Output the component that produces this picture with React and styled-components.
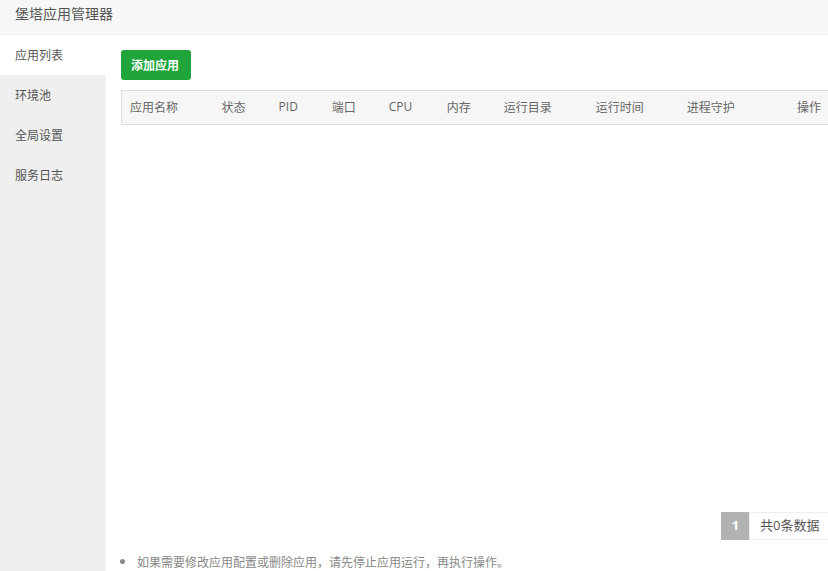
import React from "react";
import styled, { createGlobalStyle } from "styled-components";

const GlobalStyle = createGlobalStyle`
  html, body {
    margin: 0;
    height: 100%;
    overflow: hidden;
    background: #ffffff;
    font-family: "Open Sans", "Noto Sans CJK SC", sans-serif;
    font-size: 12px;
    color: #666666;
  }
  #root {
    height: 100%;
  }
`;

const Page = styled.div`
  height: 100%;
  display: flex;
  flex-direction: column;
`;

const Title = styled.div`
  height: 34px;
  line-height: 28px;
  padding-left: 15px;
  flex-shrink: 0;
  background-color: #f7f7f7;
  border-bottom: 1px solid #eeeeee;
  font-size: 14px;
  color: #555555;
`;

const Body = styled.div`
  flex: 1;
  display: flex;
  min-height: 0;
`;

const Menu = styled.div`
  width: 106px;
  flex-shrink: 0;
  background-color: #efefef;
`;

const MenuItem = styled.div`
  height: 40px;
  line-height: 42px;
  padding-left: 15px;
  color: #555555;
  background-color: ${(p) => (p.$active ? "#ffffff" : "transparent")};
`;

const Content = styled.div`
  flex: 1;
  min-width: 0;
  display: flex;
  flex-direction: column;
  padding: 15px 0 0 15px;
`;

const AddButton = styled.button`
  align-self: flex-start;
  width: 70px;
  height: 30px;
  padding: 0 2px 0 0;
  border: 0;
  border-radius: 3px;
  background-color: #20a53a;
  color: #ffffff;
  font: inherit;
  font-weight: 700;
`;

const Table = styled.table`
  width: 708px;
  margin-top: 10px;
  table-layout: fixed;
  border-collapse: collapse;
  background-color: #f6f6f6;
`;

const HeadRow = styled.tr`
  height: 34px;
  border-top: 1px solid #dddddd;
  border-bottom: 1px solid #dddddd;
  border-left: 1px solid #dddddd;
`;

const HeadCell = styled.th`
  width: ${(p) => p.$w}px;
  padding: 0 8px 2px;
  box-sizing: border-box;
  font-weight: 400;
  text-align: ${(p) => (p.$right ? "right" : "left")};
  color: #666666;
`;

const Spacer = styled.div`
  flex: 1;
`;

const Pager = styled.div`
  display: flex;
  justify-content: flex-end;
  height: 28px;
`;

const PageNum = styled.span`
  width: 28px;
  padding-left: 1px;
  box-sizing: border-box;
  line-height: 27px;
  text-align: center;
  background-color: #b2b2b2;
  color: #ffffff;
  font-size: 13px;
  font-weight: 700;
`;

const PageInfo = styled.span`
  width: 79px;
  box-sizing: border-box;
  padding-left: 10px;
  line-height: 25px;
  border: 1px solid #eeeeee;
  border-right: 0;
  font-size: 13px;
  color: #555555;
`;

const Tips = styled.ul`
  margin: 5px 0 0;
  padding: 0 0 0 16px;
  height: 26px;
  color: #888888;
`;

const Tip = styled.li`
  line-height: 34px;

  &::marker {
    font-size: 14px;
  }
`;

const columns = [
  { label: "应用名称", w: 92 },
  { label: "状态", w: 57 },
  { label: "PID", w: 53 },
  { label: "端口", w: 57 },
  { label: "CPU", w: 58 },
  { label: "内存", w: 57 },
  { label: "运行目录", w: 92 },
  { label: "运行时间", w: 91 },
  { label: "进程守护", w: 90 },
  { label: "操作", w: 60, right: true },
];

const menus = ["应用列表", "环境池", "全局设置", "服务日志"];

export default function App() {
  return (
    <Page>
      <GlobalStyle />
      <Title>堡塔应用管理器</Title>
      <Body>
        <Menu>
          {menus.map((m, i) => (
            <MenuItem key={m} $active={i === 0}>
              {m}
            </MenuItem>
          ))}
        </Menu>
        <Content>
          <AddButton>添加应用</AddButton>
          <Table>
            <thead>
              <HeadRow>
                {columns.map((c) => (
                  <HeadCell key={c.label} $w={c.w} $right={c.right}>
                    {c.label}
                  </HeadCell>
                ))}
              </HeadRow>
            </thead>
          </Table>
          <Spacer />
          <Pager>
            <PageNum>1</PageNum>
            <PageInfo>共0条数据</PageInfo>
          </Pager>
          <Tips>
            <Tip>如果需要修改应用配置或删除应用，请先停止应用运行，再执行操作。</Tip>
          </Tips>
        </Content>
      </Body>
    </Page>
  );
}
